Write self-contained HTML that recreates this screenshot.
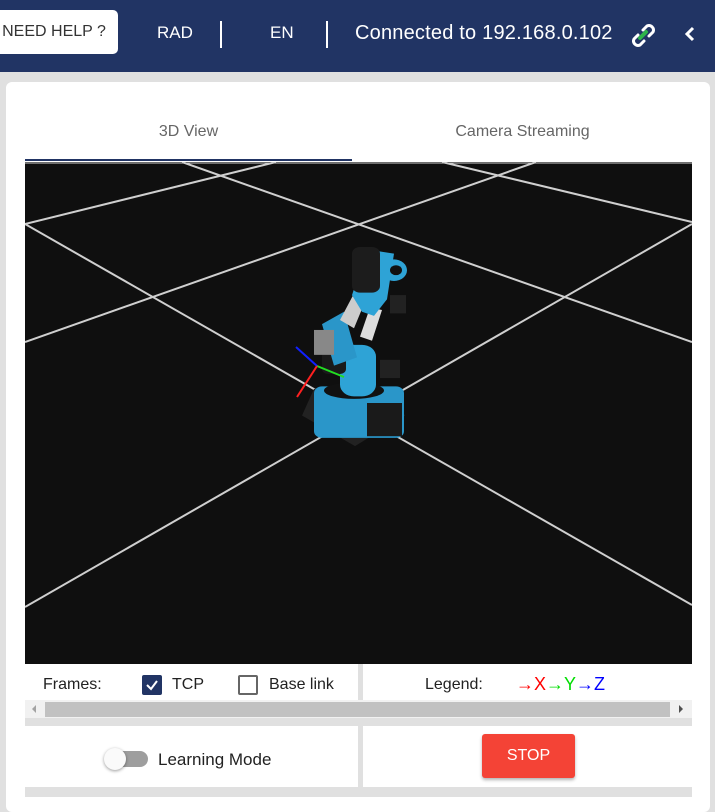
<!DOCTYPE html>
<html><head><meta charset="utf-8"><style>
body{margin:0;width:715px;height:797px;overflow:hidden;background:#e0e0e0;font-family:"Liberation Sans",sans-serif;position:relative}
.hdr{position:absolute;left:0;top:0;width:715px;height:72px;background:#213464;color:#fff}
.t{position:absolute;white-space:nowrap}
.card{position:absolute;left:6px;top:82px;width:704px;height:730px;background:#fff;border-radius:6px}
</style></head><body>
<div class="hdr">
 <div class="t" style="left:-10px;top:10px;width:128px;height:44px;background:#fff;border-radius:5px;color:#333;font-size:16px;line-height:44px;text-align:center">NEED HELP ?</div>
 <div class="t" style="left:157px;top:23px;font-size:17px">RAD</div>
 <div class="t" style="left:220px;top:21px;width:2px;height:27px;background:#fff"></div>
 <div class="t" style="left:270px;top:23px;font-size:17px">EN</div>
 <div class="t" style="left:326px;top:21px;width:2px;height:27px;background:#fff"></div>
 <div class="t" style="left:355px;top:22px;font-size:20px;letter-spacing:0.2px">Connected to 192.168.0.102</div>
 <svg class="t" style="left:626px;top:18px" width="34" height="34" viewBox="0 0 34 34">
  <path d="M14 20 L20 14" stroke="#2db34a" stroke-width="4" stroke-linecap="round"/>
  <path d="M12 17 L8 21 a4.5 4.5 0 0 0 6 6 l4-4" stroke="#fff" stroke-width="3" fill="none" stroke-linecap="round"/>
  <path d="M17 12 l4-4 a4.5 4.5 0 0 1 6 6 l-4 4" stroke="#fff" stroke-width="3" fill="none" stroke-linecap="round"/>
 </svg>
 <svg class="t" style="left:684px;top:26px" width="12" height="16"><path d="M9 2 L3 8 L9 14" stroke="#fff" stroke-width="3" fill="none"/></svg>
</div>
<div class="card"></div>
<div class="t" style="left:25px;top:123px;width:327px;text-align:center;font-size:16px;color:#666">3D View</div>
<div class="t" style="left:355px;top:123px;width:335px;text-align:center;font-size:16px;color:#666">Camera Streaming</div>
<div class="t" style="left:25px;top:159px;width:327px;height:2px;background:#213464"></div>
<svg class="t" style="left:25px;top:162px" width="667" height="502" viewBox="0 0 667 502">
 <rect width="667" height="502" fill="#0f0f0f"/>
 <g stroke="#cfcfcf" stroke-width="2" fill="none">
  <line x1="0" y1="180" x2="511" y2="0"/>
  <line x1="0" y1="62" x2="251" y2="0"/>
  <line x1="157" y1="0" x2="667" y2="180"/>
  <line x1="0" y1="62" x2="667" y2="443"/>
  <line x1="417" y1="0" x2="667" y2="60"/>
  <line x1="667" y1="62" x2="0" y2="445"/>
  <line x1="0" y1="1" x2="667" y2="1" stroke-width="1"/>
 </g>
 <g transform="translate(-3,-8) scale(1,0.83)">
  <path d="M280 315 L292 283 L365 283 L383 315 L333 352 Z" fill="#222"/>
  <rect x="292" y="280" width="90" height="62" rx="8" fill="#2a96c9"/>
  <rect x="345" y="300" width="35" height="40" fill="#1a1a1a"/>
  <ellipse cx="332" cy="285" rx="30" ry="10" fill="#111"/>
  <rect x="318" y="230" width="36" height="62" rx="14" fill="#2ea3d6"/>
  <rect x="300" y="235" width="24" height="30" rx="6" fill="#1a1a1a"/>
  <rect x="358" y="248" width="20" height="22" fill="#222"/>
  <path d="M300 205 L322 190 L335 245 L312 255 Z" fill="#2a96c9"/>
  <rect x="292" y="212" width="20" height="30" fill="#888"/>
  <path d="M318 200 L332 168 L345 172 L332 210 Z" fill="#ccc"/>
  <path d="M338 220 L348 185 L360 188 L350 225 Z" fill="#ddd"/>
  <path d="M330 170 L345 115 L372 120 L365 175 L352 195 L340 190 Z" fill="#2ea3d6"/>
  <rect x="330" y="112" width="28" height="55" rx="8" fill="#1c1c1c"/>
  <circle cx="372" cy="140" r="13" fill="#2ea3d6"/><circle cx="374" cy="140" r="6" fill="#111"/>
  <rect x="368" y="170" width="16" height="22" fill="#222"/>
 </g>
 <g stroke-width="2">
  <line x1="292" y1="204" x2="271" y2="185" stroke="#1020ff"/>
  <line x1="292" y1="204" x2="319" y2="215" stroke="#22dd22"/>
  <line x1="292" y1="204" x2="272" y2="235" stroke="#ff2020"/>
 </g>
</svg>
<div class="t" style="left:358px;top:664px;width:5px;height:36px;background:#e0e0e0"></div>
<div class="t" style="left:43px;top:676px;font-size:16px;color:#222">Frames:</div>
<div class="t" style="left:142px;top:675px;width:20px;height:20px;background:#213464;border-radius:2px"></div>
<svg class="t" style="left:142px;top:675px" width="20" height="20"><path d="M5 10 L9 14 L15 6" stroke="#fff" stroke-width="2" fill="none"/></svg>
<div class="t" style="left:172px;top:676px;font-size:16px;color:#222">TCP</div>
<div class="t" style="left:238px;top:675px;width:16px;height:16px;border:2px solid #666;border-radius:2px"></div>
<div class="t" style="left:269px;top:676px;font-size:16px;color:#222">Base link</div>
<div class="t" style="left:425px;top:676px;font-size:16px;color:#222">Legend:</div>
<div class="t" style="left:516px;top:674px;font-size:18px"><span style="color:#f00">→X</span><span style="color:#0d0">→Y</span><span style="color:#00f">→Z</span></div>
<div class="t" style="left:25px;top:700px;width:667px;height:18px;background:#f1f1f1"></div>
<div class="t" style="left:45px;top:702px;width:625px;height:15px;background:#c1c1c1"></div>
<div class="t" style="left:32px;top:705px;width:0;height:0;border:4px solid transparent;border-right-color:#a3a3a3;border-left:0"></div>
<div class="t" style="left:679px;top:705px;width:0;height:0;border:4px solid transparent;border-left-color:#505050;border-right:0"></div>
<div class="t" style="left:25px;top:718px;width:667px;height:8px;background:#e0e0e0"></div>
<div class="t" style="left:358px;top:726px;width:5px;height:71px;background:#e0e0e0"></div>
<div class="t" style="left:25px;top:787px;width:667px;height:10px;background:#e0e0e0"></div>
<div class="t" style="left:108px;top:751px;width:40px;height:16px;background:#9e9e9e;border-radius:8px"></div>
<div class="t" style="left:104px;top:748px;width:22px;height:22px;background:#fafafa;border-radius:50%;box-shadow:0 1px 3px rgba(0,0,0,.4)"></div>
<div class="t" style="left:158px;top:750px;font-size:17px;color:#222">Learning Mode</div>
<div class="t" style="left:482px;top:734px;width:93px;height:44px;background:#f44336;border-radius:3px;box-shadow:0 2px 3px rgba(0,0,0,.3);color:#fff;font-size:16px;line-height:44px;text-align:center">STOP</div>
</body></html>
